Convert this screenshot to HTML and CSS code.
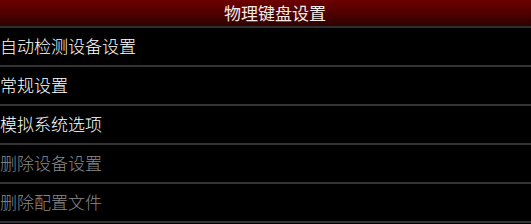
FILE: index.html
```html
<!DOCTYPE html>
<html lang="zh-CN">
<head>
    <meta charset="UTF-8">
    <title>物理键盘设置</title>
    <link rel="stylesheet" href="styles.css">
</head>
<body>
    <header class="title-bar">物理键盘设置</header>
    <ul class="menu">
        <li class="menu-item">自动检测设备设置</li>
        <li class="menu-item">常规设置</li>
        <li class="menu-item">模拟系统选项</li>
        <li class="menu-item disabled">删除设备设置</li>
        <li class="menu-item disabled">删除配置文件</li>
    </ul>
</body>
</html>
```

FILE: styles.css
```css
* {
    margin: 0;
    padding: 0;
    box-sizing: border-box;
}

body {
    background: #000;
    color: #fff;
    font-family: "Noto Sans CJK SC", "Liberation Sans", sans-serif;
    font-weight: 300;
    width: 531px;
    height: 224px;
    overflow: hidden;
}

.title-bar {
    height: 26px;
    background: linear-gradient(to bottom, #6e0000 0%, #4a0000 60%, #2c0202 100%);
    color: #f4eaea;
    font-size: 17px;
    font-weight: 400;
    line-height: 25px;
    text-align: center;
    padding-left: 19px;
}

.menu {
    list-style: none;
    border-top: 2px solid #2e2e2e;
}

.menu-item {
    height: 39px;
    line-height: 36px;
    font-size: 17px;
    border-bottom: 2px solid #333;
}

.disabled {
    color: #8a8a8a;
}
```
